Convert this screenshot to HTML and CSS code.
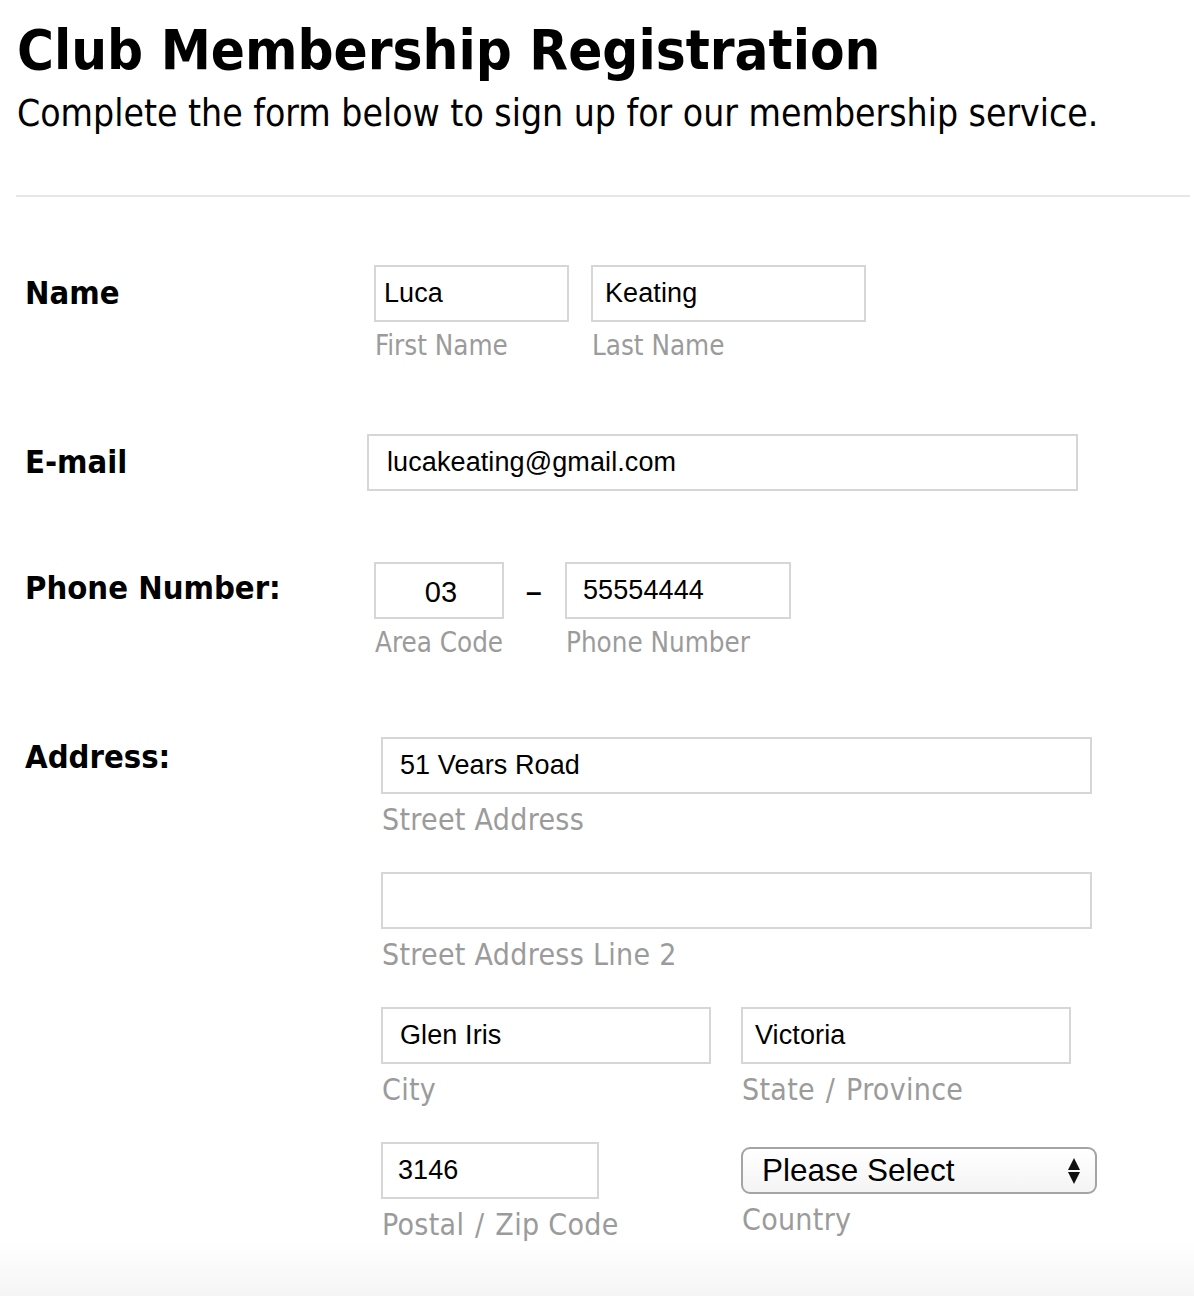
FILE: index.html
```html
<!DOCTYPE html>
<html>
<head>
<meta charset="utf-8">
<link rel="stylesheet" href="styles.css">
</head>
<body>
<div class="page">
  <header class="head">
    <h1 class="title">Club Membership Registration</h1>
    <p class="subtitle">Complete the form below to sign up for our membership service.</p>
  </header>
  <hr class="divider">
  <form class="form">
    <div class="row row-name">
      <div class="label">Name</div>
      <div class="fields">
        <div class="field">
          <div class="input w-first pad-11">Luca</div>
          <div class="sub">First Name</div>
        </div>
        <div class="field">
          <div class="input w-last pad-15">Keating</div>
          <div class="sub">Last Name</div>
        </div>
      </div>
    </div>

    <div class="row row-email">
      <div class="label">E-mail</div>
      <div class="fields shift-left">
        <div class="input w-email pad-20">lucakeating@gmail.com</div>
      </div>
    </div>

    <div class="row row-phone">
      <div class="label label-phone">Phone Number:</div>
      <div class="fields">
        <div class="field">
          <div class="input w-area center">03</div>
          <div class="sub">Area Code</div>
        </div>
        <div class="dash">–</div>
        <div class="field">
          <div class="input w-phone pad-18">55554444</div>
          <div class="sub">Phone Number</div>
        </div>
      </div>
    </div>

    <div class="row row-address">
      <div class="label label-address">Address:</div>
      <div class="fields shift-right column">
        <div class="field">
          <div class="input w-street pad-19">51 Vears Road</div>
          <div class="sub big">Street Address</div>
        </div>
        <div class="field">
          <div class="input w-street pad-19"></div>
          <div class="sub big">Street Address Line 2</div>
        </div>
        <div class="pair">
          <div class="field">
            <div class="input w-city pad-19">Glen Iris</div>
            <div class="sub big">City</div>
          </div>
          <div class="field">
            <div class="input w-city pad-15">Victoria</div>
            <div class="sub big">State<span class="slash"> / </span>Province</div>
          </div>
        </div>
        <div class="pair">
          <div class="field">
            <div class="input w-zip pad-16">3146</div>
            <div class="sub big">Postal<span class="slash"> / </span>Zip Code</div>
          </div>
          <div class="field">
            <div class="select">
              <span class="select-text">Please Select</span>
              <svg class="select-arrows" width="12" height="28" viewBox="0 0 12 28"><path d="M6 1 L12 13 L0 13 Z" fill="#111"/><path d="M0 15 L12 15 L6 27 Z" fill="#111"/></svg>
            </div>
            <div class="sub big">Country</div>
          </div>
        </div>
      </div>
    </div>
  </form>
  <div class="footer-fade"></div>
</div>
</body>
</html>
```

FILE: styles.css
```css
html, body {
  margin: 0;
  padding: 0;
  background: #fff;
}

.page {
  width: 1194px;
  height: 1296px;
  overflow: hidden;
  position: relative;
  font-family: "DejaVu Sans Condensed", "DejaVu Sans", "Noto Sans", sans-serif;
  font-stretch: condensed;
  color: #000;
}

.head {
  padding: 18px 0 0 17px;
}

.title {
  margin: 0;
  font-size: 56px;
  font-weight: bold;
  line-height: 64px;
}

.subtitle {
  margin: 0;
  margin-top: 10px;
  font-size: 37px;
  line-height: 44px;
}

.divider {
  margin: 59px 4px 0 16px;
  border: 0;
  height: 2px;
  background: #e6e6e6;
}

.form {
  padding-left: 25px;
}

.row {
  display: grid;
  grid-template-columns: 349px 1fr;
}

.row-name { margin-top: 68px; }
.row-email { margin-top: 72px; }
.row-phone { margin-top: 71px; }
.row-address { margin-top: 78px; }

.label {
  font-weight: bold;
  font-size: 32.5px;
  line-height: 40px;
  padding-top: 8px;
}

.label-phone { padding-top: 6px; }
.label-address { padding-top: 0; }

.fields {
  display: flex;
  align-items: flex-start;
  gap: 22px;
}

.fields.column {
  flex-direction: column;
  gap: 35px;
}

.shift-left { margin-left: -7px; }
.shift-right { margin-left: 7px; }

.pair {
  display: grid;
  grid-template-columns: 330px 356px;
  column-gap: 30px;
}

.field {
  display: flex;
  flex-direction: column;
}

.input {
  box-sizing: border-box;
  height: 57px;
  border: 2px solid #d6d6d6;
  background: #fff;
  font-family: "Liberation Sans", Arial, sans-serif;
  font-stretch: normal;
  font-size: 27px;
  letter-spacing: 0.1px;
  line-height: 53px;
  padding-left: 10px;
  white-space: nowrap;
}

.input.center {
  text-align: center;
  padding-left: 4px;
  padding-top: 4px;
  line-height: 49px;
  font-size: 29px;
}
.pad-11 { padding-left: 8px; }
.pad-15 { padding-left: 12px; }
.pad-16 { padding-left: 15px; }
.pad-18 { padding-left: 16px; }
.pad-19 { padding-left: 17px; }
.pad-20 { padding-left: 18px; }

.w-first { width: 195px; }
.w-last { width: 275px; }
.w-email { width: 711px; }
.w-area { width: 130px; }
.w-phone { width: 226px; }
.w-street { width: 711px; }
.w-city { width: 330px; }
.w-zip { width: 218px; }

.sub {
  color: #9b9b9b;
  font-size: 27.5px;
  line-height: 34px;
  margin-top: 6px;
  padding-left: 1px;
  white-space: nowrap;
}

.sub.big {
  font-size: 30px;
  line-height: 34px;
  margin-top: 9px;
  letter-spacing: 0.3px;
}

.slash {
  margin: 0 2px;
}

.dash {
  font-family: "Liberation Sans", Arial, sans-serif;
  font-size: 28px;
  line-height: 60px;
  font-weight: bold;
  width: 17px;
}

.select {
  box-sizing: border-box;
  width: 356px;
  height: 47px;
  margin-top: 5px;
  border: 2px solid #a4a4a4;
  border-radius: 9px;
  background: linear-gradient(#ffffff, #f4f4f4);
  display: flex;
  align-items: center;
  justify-content: space-between;
  padding: 0 15px 0 19px;
}

.select-text {
  font-family: "Liberation Sans", Arial, sans-serif;
  font-stretch: normal;
  font-size: 31.5px;
}

.select-arrows {
  display: block;
}

.footer-fade {
  position: absolute;
  left: 0;
  right: 0;
  bottom: 0;
  height: 55px;
  background: linear-gradient(rgba(245,245,245,0), #f5f5f5);
}
```
